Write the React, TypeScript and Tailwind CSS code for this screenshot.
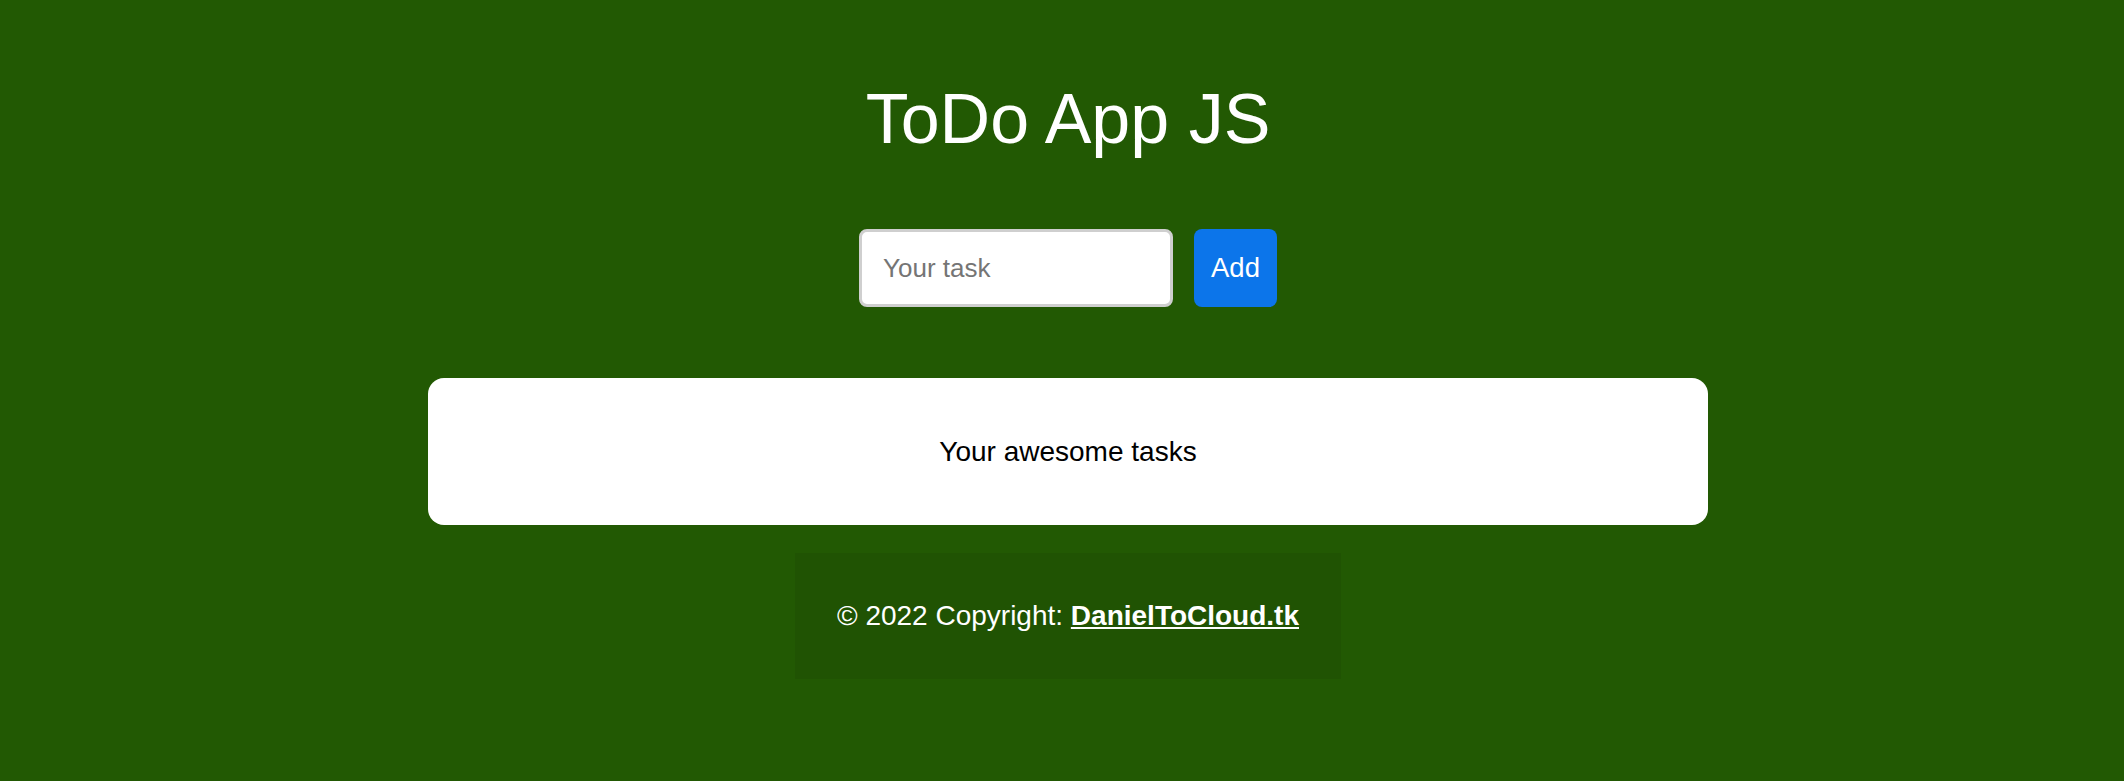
import { useState } from 'react';

function App() {
  const [task, setTask] = useState('');
  return (
    <div className="min-h-screen w-full bg-[#225903] flex flex-col items-center pl-[12px] pt-[79px] font-['Liberation_Sans',Arial,sans-serif]">
      <h1 className="text-[70px] leading-[80px] font-normal text-white">ToDo App JS</h1>

      <form className="mt-[70px] flex gap-[21px]" onSubmit={(e) => e.preventDefault()}>
        <input
          type="text"
          value={task}
          onChange={(e) => setTask(e.target.value)}
          placeholder="Your task"
          className="w-[314px] h-[78px] bg-white border-[3px] border-[#cfcfcf] rounded-[8px] px-[21px] text-[26px] text-black placeholder:text-[#757575] outline-none"
        />
        <button
          type="submit"
          className="w-[83px] h-[78px] rounded-[8px] bg-[#0c75ea] text-white text-[27.5px]"
        >
          Add
        </button>
      </form>

      <div className="mt-[71px] w-[1280px] h-[147px] rounded-[16px] bg-white flex items-center justify-center">
        <p className="text-[28px] leading-[32px] text-black">Your awesome tasks</p>
      </div>

      <footer className="mt-[28px] h-[126px] px-[42px] bg-[#205303] flex items-center text-white text-[28px] leading-[32px]">
        <span>
          © 2022 Copyright:{' '}
          <a href="#" className="font-bold underline">
            DanielToCloud.tk
          </a>
        </span>
      </footer>
    </div>
  );
}

export default App;
